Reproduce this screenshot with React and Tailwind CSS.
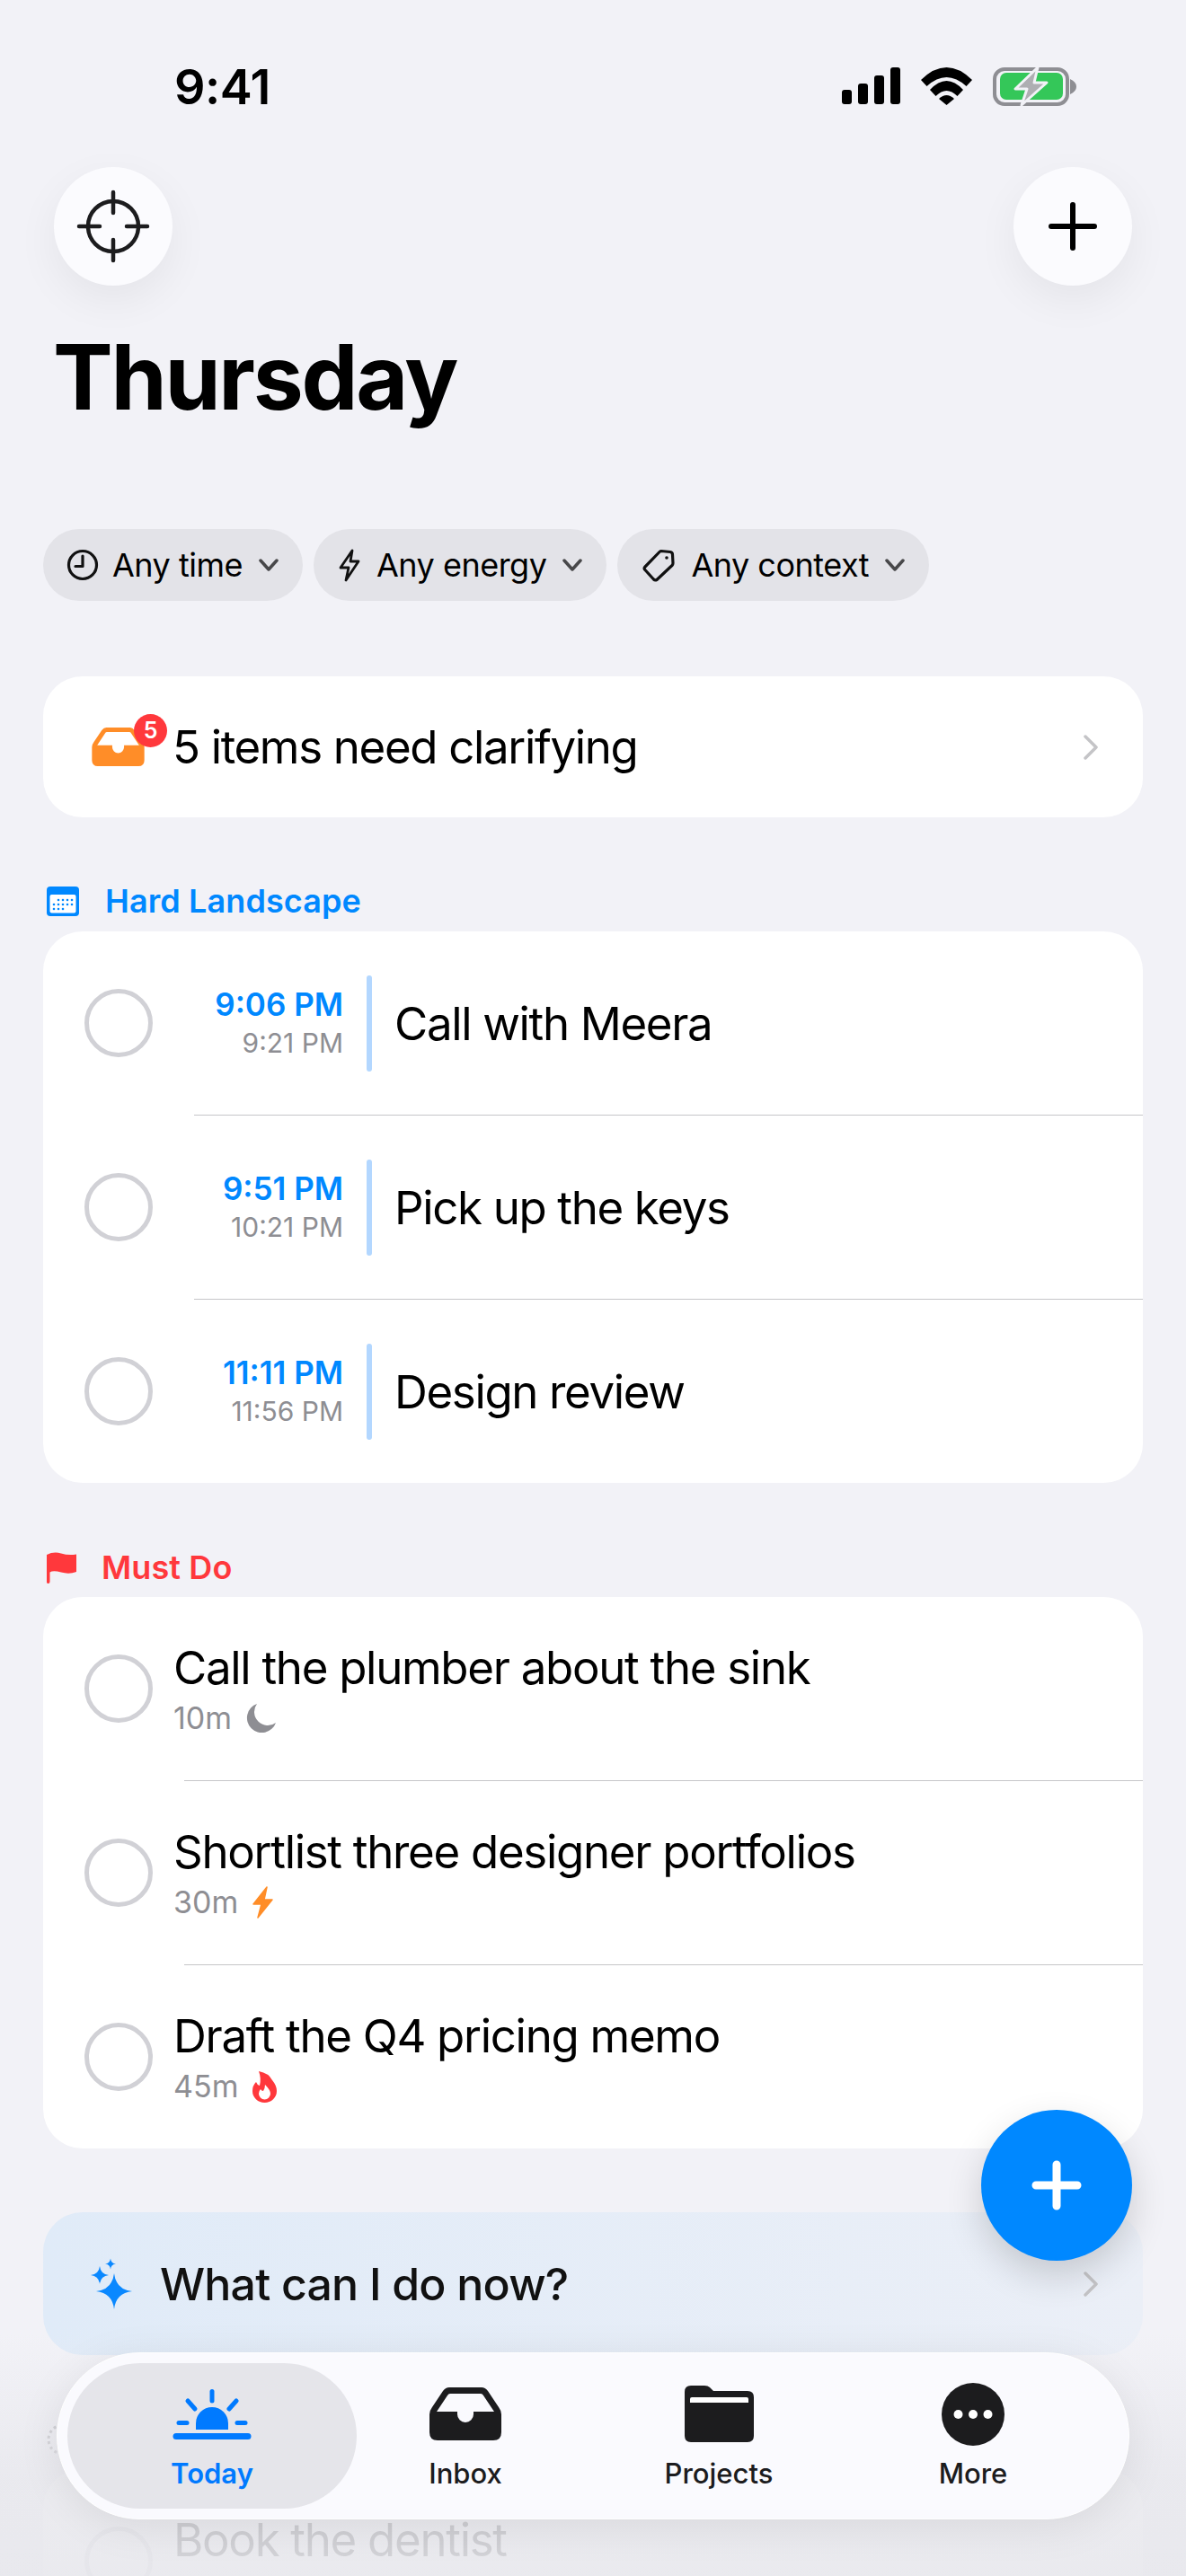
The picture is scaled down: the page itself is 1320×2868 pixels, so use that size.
import React from "react";

const InboxIcon = ({ className }) => (
  <svg viewBox="0 0 80 59" className={className} fill="currentColor">
    <path
      fillRule="evenodd"
      d="M22 0H58Q62 0 65 4L77 22Q80 26 80 30V50Q80 59 71 59H9Q0 59 0 50V30Q0 26 3 22L15 4Q18 0 22 0ZM23 7Q21 7 20 9L8 27H31V30A9 9 0 0 0 49 30V27H72L60 9Q59 7 57 7Z"
    />
  </svg>
);

const Chevron = () => (
  <svg width="16" height="28" viewBox="0 0 16 28" fill="none" stroke="#c4c4c7" strokeWidth="3.5" strokeLinecap="round" strokeLinejoin="round">
    <path d="M2 2L14 14L2 26" />
  </svg>
);

const ChipChevron = () => (
  <svg width="22" height="14" viewBox="0 0 22 14" fill="none" stroke="#48484a" strokeWidth="3.5" strokeLinecap="round" strokeLinejoin="round">
    <path d="M2 2L11 12L20 2" />
  </svg>
);

const ClockIcon = () => (
  <svg width="36" height="36" viewBox="0 0 36 36" fill="none" stroke="#111" strokeWidth="3.2" strokeLinecap="round" strokeLinejoin="round">
    <circle cx="18" cy="18" r="15.5" />
    <path d="M18 8V19.5H10" />
  </svg>
);

const BoltOutline = () => (
  <svg width="24" height="37" viewBox="0 0 24 37" fill="none" stroke="#111" strokeWidth="2.8" strokeLinejoin="round">
    <path d="M15 2L2 21H11L8 35L22 14H13Z" />
  </svg>
);

const TagIcon = () => (
  <svg width="36" height="37" viewBox="0 0 36 37" fill="none" stroke="#111" strokeWidth="3.2" strokeLinejoin="round">
    <path d="M21 2.5L31 3.5Q33.5 4 33.5 6.5L34 16Q34 17.5 33 18.5L16 34.5Q14 35.5 12.5 34L2.5 23Q1.5 21.5 3 20L19 3.5Q20 2.5 21 2.5Z" />
    <circle cx="27" cy="10" r="1.8" fill="#111" stroke="none" />
  </svg>
);

const CalendarIcon = () => (
  <svg width="36" height="33" viewBox="0 0 36 33" className="shrink-0">
    <rect width="36" height="33" rx="4" fill="#0088ff" />
    <rect x="3.5" y="9" width="29" height="20.5" rx="2" fill="#fff" />
    <g fill="#0088ff">
      {[15, 20, 25].map((y) =>
        [8, 13, 18, 23, 28].map((x) =>
          (y === 15 && x === 8) || (y === 25 && x > 18) ? null : <circle key={`${x}-${y}`} cx={x} cy={y} r="1.3" />
        )
      )}
    </g>
  </svg>
);

const FlagIcon = () => (
  <svg width="33" height="35" viewBox="0 0 33 35" className="shrink-0" fill="#ff383c">
    <path d="M0 3Q8 -1 16 1.5T33 2.5V22Q25 25 16 22.5T3.5 22.5V33Q3.5 35 1.7 35T0 33Z" />
  </svg>
);

const DashedCircle = () => (
  <svg width="36" height="36" viewBox="0 0 36 36" fill="none" stroke="#b4b4b9" strokeWidth="3" strokeDasharray="3 3.4" className="shrink-0">
    <circle cx="18" cy="18" r="16" />
  </svg>
);

const MoonIcon = () => (
  <svg width="33" height="33" viewBox="0 0 33 33" fill="#8e8e93">
    <path d="M12 0A16.5 16.5 0 1 0 33 21A15 15 0 0 1 12 0Z" />
  </svg>
);

const BoltFilled = () => (
  <svg width="23" height="36" viewBox="0 0 23 36" fill="#ff8d28" stroke="#ff8d28" strokeWidth="1.5" strokeLinejoin="round">
    <path d="M16 1L1 20H10L6 35L22 15H13Z" />
  </svg>
);

const FlameIcon = () => (
  <svg width="27" height="35" viewBox="0 0 27 35">
    <path fill="#ff383c" d="M7 0Q18 2 22 10Q27 16 27 22A13.5 13 0 0 1 0 22Q0 16 4 12Q5 15 8 16Q10 8 7 0Z" />
    <path fill="#fff" d="M14 15Q20 21 20 25A6.5 6.5 0 0 1 7 25Q7 22 9 20Q10 22 12 22Q14 19 14 15Z" />
  </svg>
);

const star = (cx, cy, r) => {
  const k = r * 0.1;
  return `M${cx} ${cy - r}Q${cx + k} ${cy - k} ${cx + r} ${cy}Q${cx + k} ${cy + k} ${cx} ${cy + r}Q${cx - k} ${cy + k} ${cx - r} ${cy}Q${cx - k} ${cy - k} ${cx} ${cy - r}Z`;
};

const Sparkles = () => (
  <svg width="48" height="58" viewBox="0 0 48 58" fill="#0a88ff" className="shrink-0">
    <path d={star(27, 37, 20)} />
    <path d={star(11, 19, 10)} />
    <path d={star(23, 6.5, 6)} />
  </svg>
);

const SunriseIcon = () => (
  <svg width="88" height="56" viewBox="0 0 88 56" fill="#007aff" stroke="none">
    <path d="M26 45V38A18 18 0 0 1 62 38V45Z" />
    <rect x="0.5" y="49" width="87" height="7" rx="3.5" />
    <g stroke="#007aff" strokeWidth="5" strokeLinecap="round">
      <path d="M44 2.5V13" />
      <path d="M17 13L25 22" />
      <path d="M71 13L63 22" />
      <path d="M7 37.5H16" />
      <path d="M72 37.5H81" />
    </g>
  </svg>
);

const FolderIcon = () => (
  <svg width="77" height="63" viewBox="0 0 77 63">
    <path fill="#1c1c1e" d="M7 0H22Q26 0 28 2L32 6H70Q77 6 77 13V56Q77 63 70 63H7Q0 63 0 56V7Q0 0 7 0Z" />
    <path fill="#fff" d="M8 13H69Q71 13 71 15V19H6V15Q6 13 8 13Z" />
  </svg>
);

const MoreIcon = () => (
  <svg width="70" height="70" viewBox="0 0 70 70">
    <circle cx="35" cy="35" r="35" fill="#1c1c1e" />
    <circle cx="18.5" cy="35" r="5" fill="#fff" />
    <circle cx="35" cy="35" r="5" fill="#fff" />
    <circle cx="51.5" cy="35" r="5" fill="#fff" />
  </svg>
);

const StatusBar = () => (
  <div className="flex h-[186px] items-start justify-between pl-[194px] pr-[122px] pt-[70px]">
    <span className="text-[54px] font-semibold leading-[54px] tracking-[-0.5px] text-black">9:41</span>
    <div className="mt-[3px] flex items-center">
      <svg width="65" height="41" viewBox="0 0 65 41" fill="#000" className="mt-[-1px]">
        <rect x="0" y="25" width="11" height="16" rx="3" />
        <rect x="18" y="18" width="11" height="23" rx="3" />
        <rect x="36" y="9" width="11" height="32" rx="3" />
        <rect x="54" y="0" width="11" height="41" rx="3" />
      </svg>
      <svg width="57" height="42" viewBox="0 0 57 42" fill="#000" className="ml-[23px]">
        <path d="M0 14Q28.5 -14 57 14L50.5 21Q28.5 1 6.5 21Z" />
        <path d="M10 25Q28.5 5 47 25L40.5 32Q28.5 20 16.5 32Z" />
        <path d="M20 35Q28.5 27 37 35L28.5 42Z" />
      </svg>
      <svg width="93" height="46" viewBox="0 0 93 46" className="ml-[23px]">
        <rect x="2" y="4" width="81" height="39" rx="11" fill="none" stroke="#8e8e93" strokeWidth="4" />
        <rect x="8" y="8" width="70" height="30" rx="7" fill="#34c759" />
        <path d="M86 15Q93 18 93 23.5T86 32Z" fill="#8e8e93" />
        <path d="M50 2L25 26H38L32 44L60 19H46Z" fill="#aeaeb2" stroke="#f2f2f7" strokeWidth="3" strokeLinejoin="round" />
      </svg>
    </div>
  </div>
);

const Chip = ({ icon, label, gap, pad }) => (
  <div className={`flex h-[80px] items-center rounded-[40px] bg-[#e3e3e8] ${pad}`}>
    {icon}
    <span className={`text-[36px] leading-none tracking-[-0.5px] text-black ${gap}`}>{label}</span>
    <span className="ml-[18px] flex"><ChipChevron /></span>
  </div>
);

const Section = ({ icon, title, color, gap, mt, mb, children }) => (
  <div className={mt}>
    <div className={`flex h-[40px] items-center pl-[4px] ${mb}`}>
      {icon}
      {title && <span className={`text-[36px] font-semibold leading-none tracking-[0.1px] ${color} ${gap}`}>{title}</span>}
    </div>
    <div className="overflow-hidden rounded-[44px] bg-white">{children}</div>
  </div>
);

const Circle = () => <div className="h-[76px] w-[76px] shrink-0 rounded-full border-[5px] border-[#d1d1d6]" />;

const Sep = ({ inset }) => <div className={`h-px bg-[#c6c6c8] ${inset}`} />;

const TimedRow = ({ start, end, title }) => (
  <div className="flex h-[204px] items-center pl-[46px]">
    <Circle />
    <div className="w-[212px] shrink-0 pt-[2px] text-right">
      <div className="text-[35px] font-semibold leading-[43px] text-[#0088ff]">{start}</div>
      <div className="text-[30px] leading-[43px] text-[#8e8e93]">{end}</div>
    </div>
    <div className="ml-[26px] h-[107px] w-[6px] rounded-full bg-[#b3d7ff]" />
    <div className="ml-[25px] pt-[1px] text-[51px] leading-none tracking-[-1.35px] text-black">{title}</div>
  </div>
);

const TaskRow = ({ title, mins, icon }) => (
  <div className="flex h-[204px] items-center pl-[46px]">
    <Circle />
    <div className="ml-[23px] h-[120px] pt-[8px]">
      <div className="text-[51px] leading-[57px] tracking-[-1.3px] text-black">{title}</div>
      {mins && (
        <div className="flex h-[56px] items-center gap-[16px]">
          <span className="text-[34px] leading-none text-[#8e8e93]">{mins}</span>
          {icon}
        </div>
      )}
    </div>
  </div>
);

const Tab = ({ icon, label, active, className }) => (
  <div className={`flex flex-col items-center ${className}`}>
    <div className="flex h-[70px] items-center">{icon}</div>
    <span className={`mt-[13px] text-[31px] leading-[36px] ${active ? "font-semibold text-[#007aff]" : "font-medium text-[#1c1c1e]"}`}>
      {label}
    </span>
  </div>
);

export default function App() {
  return (
    <div className="relative h-[2868px] w-[1320px] overflow-hidden bg-[#f2f2f7] font-['Inter',sans-serif]">
      <StatusBar />

      <div className="flex justify-between px-[60px]">
        <button className="flex h-[132px] w-[132px] items-center justify-center rounded-full bg-[#fbfbfe] shadow-[0_16px_48px_rgba(0,0,0,0.06)]">
          <svg width="84" height="84" viewBox="0 0 84 84" fill="none" stroke="#1c1c1e" strokeWidth="4.5" strokeLinecap="round">
            <circle cx="42" cy="42" r="28" />
            <path d="M42 4V27M42 57V80M4 42H27M57 42H80" />
          </svg>
        </button>
        <button className="flex h-[132px] w-[132px] items-center justify-center rounded-full bg-[#fbfbfe] shadow-[0_16px_48px_rgba(0,0,0,0.06)]">
          <svg width="54" height="54" viewBox="0 0 54 54" fill="none" stroke="#000" strokeWidth="6" strokeLinecap="round">
            <path d="M27 3V51M3 27H51" />
          </svg>
        </button>
      </div>

      <div className="px-[48px]">
        <h1 className="ml-[11px] mt-[52px] text-[100px] font-bold leading-[100px] tracking-[-2.3px] text-black">Thursday</h1>

        <div className="mt-[119px] flex gap-[12px]">
          <Chip icon={<ClockIcon />} label="Any time" gap="ml-[15px]" pad="pl-[26px] pr-[27px]" />
          <Chip icon={<BoltOutline />} label="Any energy" gap="ml-[18px]" pad="pl-[28px] pr-[27px]" />
          <Chip icon={<TagIcon />} label="Any context" gap="ml-[18px]" pad="pl-[28px] pr-[27px]" />
        </div>

        <div className="mt-[84px] flex h-[157px] items-center rounded-[44px] bg-white pl-[54px] pr-[50px]">
          <div className="relative h-[43px] w-[59px] text-[#ff8d28]">
            <InboxIcon className="h-[43px] w-[59px]" />
            <div className="absolute left-[47px] top-[-15px] flex h-[37px] w-[37px] items-center justify-center rounded-full bg-[#ff383c] text-[25px] font-semibold leading-none text-white">
              5
            </div>
          </div>
          <span className="ml-[31px] text-[51px] leading-none tracking-[-1.35px] text-black">5 items need clarifying</span>
          <span className="ml-auto flex"><Chevron /></span>
        </div>

        <Section icon={<CalendarIcon />} title="Hard Landscape" color="text-[#0088ff]" gap="ml-[29px]" mt="mt-[73px]" mb="mb-[14px]">
          <TimedRow start="9:06 PM" end="9:21 PM" title="Call with Meera" />
          <Sep inset="ml-[168px]" />
          <TimedRow start="9:51 PM" end="10:21 PM" title="Pick up the keys" />
          <Sep inset="ml-[168px]" />
          <TimedRow start="11:11 PM" end="11:56 PM" title="Design review" />
        </Section>

        <Section icon={<FlagIcon />} title="Must Do" color="text-[#ff383c]" gap="ml-[28px]" mt="mt-[74px]" mb="mb-[13px]">
          <TaskRow title="Call the plumber about the sink" mins="10m" icon={<MoonIcon />} />
          <Sep inset="ml-[157px]" />
          <TaskRow title="Shortlist three designer portfolios" mins="30m" icon={<BoltFilled />} />
          <Sep inset="ml-[157px]" />
          <TaskRow title="Draft the Q4 pricing memo" mins="45m" icon={<FlameIcon />} />
        </Section>

        <div className="mt-[71px] flex h-[159px] items-center rounded-[44px] bg-linear-to-r from-[#e0ebf8] to-[#ebeff7] pl-[52px] pr-[50px]">
          <Sparkles />
          <span className="ml-[30px] text-[50px] font-medium leading-none tracking-[-0.8px] text-[#111]">What can I do now?</span>
          <span className="ml-auto flex"><Chevron /></span>
        </div>

        <Section icon={<DashedCircle />} mt="mt-[74px]" mb="mb-[13px]">
          <TaskRow title="Book the dentist" />
        </Section>
      </div>

      {/* fade behind the tab bar */}
      <div className="pointer-events-none absolute bottom-0 left-0 h-[270px] w-full bg-linear-to-b from-[#e8e8ed]/0 via-[#e8e8ed]/85 via-60% to-[#e8e8ed]/92" />

      <button className="absolute left-[1092px] top-[2349px] flex h-[168px] w-[168px] items-center justify-center rounded-full bg-[#0088ff] shadow-[0_16px_40px_rgba(0,0,0,0.16)]">
        <svg width="56" height="56" viewBox="0 0 56 56" fill="none" stroke="#fff" strokeWidth="9" strokeLinecap="round">
          <path d="M28 5V51M5 28H51" />
        </svg>
      </button>

      <div className="absolute left-[63px] top-[2619px] flex h-[186px] w-[1194px] items-center rounded-full border border-white bg-[#fafafe] pl-[11px] shadow-[0_8px_48px_rgba(0,0,0,0.08)]">
        <div className="flex h-[162px] w-[322px] items-center justify-center rounded-full bg-[#e5e5ea]">
          <Tab icon={<SunriseIcon />} label="Today" active />
        </div>
        <Tab icon={<InboxIcon className="h-[59px] w-[80px] text-[#1c1c1e]" />} label="Inbox" className="ml-[21px] w-[200px]" />
        <Tab icon={<FolderIcon />} label="Projects" className="ml-[82px] w-[200px]" />
        <Tab icon={<MoreIcon />} label="More" className="ml-[83px] w-[200px]" />
      </div>
    </div>
  );
}
